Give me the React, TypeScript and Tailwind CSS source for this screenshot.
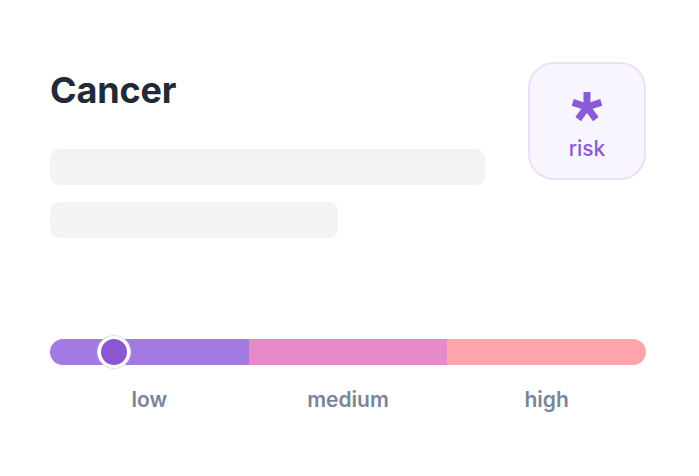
export default function App() {
  const arms = [-90, -18, 54, 126, 198]
  return (
    <div className="w-[699px] h-[476px] bg-white font-['Inter',sans-serif]">
      <div className="pl-[50px] pr-[53px] pt-[62px]">
        <div className="flex justify-between">
          <div className="flex flex-col">
            <h1 className="text-[36px] leading-[40px] font-bold text-[#222a35] mt-[8px] tracking-[-0.005em]">Cancer</h1>
            <div className="mt-[39px] h-[36px] w-[435px] rounded-[9px] bg-[#f3f3f3]" />
            <div className="mt-[17px] h-[36px] w-[288px] rounded-[9px] bg-[#f3f3f3]" />
          </div>
          <div className="w-[118px] h-[118px] rounded-[26px] border-2 border-[#ebe0fb] bg-[#f9f5fe] flex flex-col items-center pt-[25px]">
            <svg width="36" height="36" viewBox="0 0 36 36">
              {arms.map((a) => (
                <line
                  key={a}
                  x1="18"
                  y1="18"
                  x2={18 + 15 * Math.cos((a * Math.PI) / 180)}
                  y2={18 + 15 * Math.sin((a * Math.PI) / 180)}
                  stroke="#8b5ad6"
                  strokeWidth="7"
                />
              ))}
            </svg>
            <span className="text-[21px] leading-[24px] font-medium text-[#8b5ad6] mt-[12px]">risk</span>
          </div>
        </div>

        {/* risk slider */}
        <div className="mt-[101px]">
          <div className="relative flex h-[26px] rounded-full overflow-hidden">
            <div className="flex-1 bg-[#a27ae2]" />
            <div className="flex-1 bg-[#e589c8]" />
            <div className="flex-1 bg-[#fea5ab]" />
          </div>
          <div className="relative">
            <div className="absolute left-[47px] top-[-30px] w-[34px] h-[34px] rounded-full bg-white border border-[#e4dbf5] flex items-center justify-center">
              <div className="w-[26px] h-[26px] rounded-full bg-[#8b57d0]" />
            </div>
          </div>
          <div className="flex mt-[22px] text-[21px] leading-[26px] font-semibold text-[#7a8599]">
            <span className="flex-1 text-center">low</span>
            <span className="flex-1 text-center">medium</span>
            <span className="flex-1 text-center">high</span>
          </div>
        </div>
      </div>
    </div>
  )
}
